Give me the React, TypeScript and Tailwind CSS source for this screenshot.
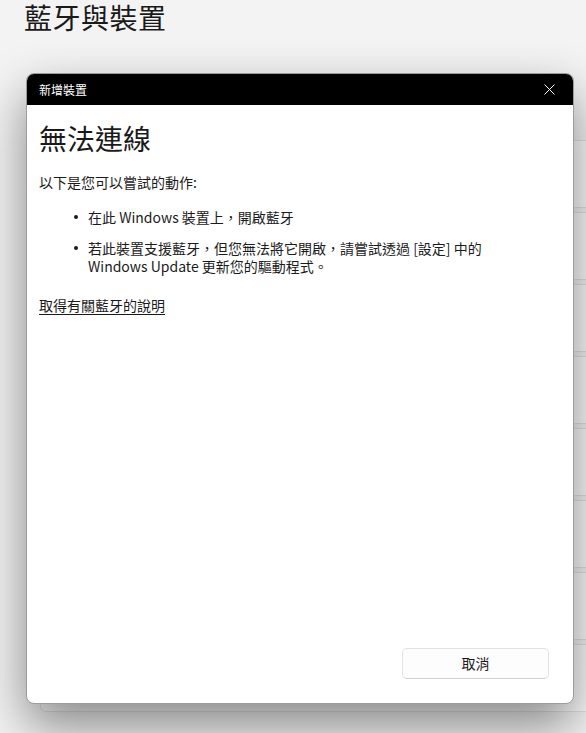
import React from "react";

const font = { fontFamily: '"Noto Sans CJK TC", "Noto Sans", sans-serif' };

export default function App() {
  const cards = [0, 1, 2, 3, 4, 5, 6, 7];
  return (
    <div className="relative w-full h-[733px] overflow-hidden bg-[#f3f3f3] text-[#1b1b1b]" style={font}>
      <div className="pl-6 pt-[2px]">
        <h1 className="text-[28px] leading-[30px] font-normal tracking-[0.5px] text-[#1a1a1a]">藍牙與裝置</h1>
      </div>
      <div className="mt-[108px] ml-[40px] -mr-10 flex flex-col gap-1">
        {cards.map((c) => (
          <div key={c} className="h-[68px] rounded-md bg-[#fbfbfb] border border-[#e2e2e2]" />
        ))}
      </div>

      <div className="absolute left-[26px] top-[73px] w-[548px] h-[631px] rounded-lg overflow-hidden bg-white border border-[#9c9c9c] shadow-[0_22px_50px_rgba(0,0,0,0.45)] flex flex-col">
        <div className="h-[31px] bg-black flex items-center justify-between pl-3 pr-[18px] shrink-0">
          <span className="text-white text-[12px] leading-none">新增裝置</span>
          <svg width="11" height="11" viewBox="0 0 11 11">
            <path d="M0.5 0.5 L10.5 10.5 M10.5 0.5 L0.5 10.5" stroke="white" strokeWidth="1" fill="none" />
          </svg>
        </div>
        <div className="flex-1 pl-3 pr-6 pt-[15px]">
          <h2 className="text-[28px] leading-[36px] font-normal text-[#1a1a1a]">無法連線</h2>
          <p className="mt-[16px] text-[14px] leading-[20px]">以下是您可以嘗試的動作:</p>
          <ul className="mt-[16px] flex flex-col gap-[13px] text-[14px] leading-[18px]">
            <li className="flex">
              <span className="w-[49px] shrink-0 flex items-start pt-[7px] pl-[35px]">
                <span className="w-[4px] h-[4px] rounded-full bg-[#1a1a1a]" />
              </span>
              <span>在此 Windows 裝置上，開啟藍牙</span>
            </li>
            <li className="flex">
              <span className="w-[49px] shrink-0 flex items-start pt-[7px] pl-[35px]">
                <span className="w-[4px] h-[4px] rounded-full bg-[#1a1a1a]" />
              </span>
              <span className="block">
                若此裝置支援藍牙，但您無法將它開啟，請嘗試透過 [設定] 中的
                <br />
                Windows Update 更新您的驅動程式。
              </span>
            </li>
          </ul>
          <a className="block mt-[20px] text-[14px] leading-[20px] underline underline-offset-[3px] text-[#1a1a1a]">取得有關藍牙的說明</a>
        </div>
        <div className="flex justify-end pr-6 pb-6 shrink-0">
          <button className="w-[147px] h-[31px] rounded-[5px] border border-[#e3e3e3] border-b-[#d0d0d0] bg-[#fdfdfd] text-[14px] text-[#1a1a1a]">
            取消
          </button>
        </div>
      </div>
    </div>
  );
}
